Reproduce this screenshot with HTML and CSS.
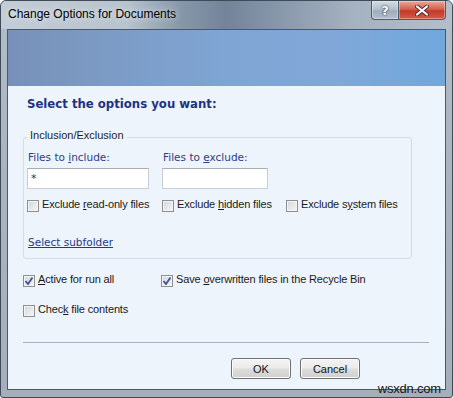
FILE: index.html
```html
<!DOCTYPE html>
<html lang="en">
<head>
    <meta charset="UTF-8">
    <title>Change Options for Documents</title>
    <link rel="stylesheet" href="styles.css">
</head>
<body>
    <div class="window">
        <div class="titlebar">
            <span class="title">Change Options for Documents</span>
            <div class="caption-buttons">
                <span class="cap-btn help">?</span>
                <span class="cap-btn close">
                    <svg width="14" height="11" viewBox="0 0 14 11">
                        <path d="M2 1.5 L12 9.5 M12 1.5 L2 9.5" stroke="#5a2a24" stroke-width="4" stroke-linecap="round"/>
                        <path d="M2 1.5 L12 9.5 M12 1.5 L2 9.5" stroke="#ffffff" stroke-width="2.2" stroke-linecap="round"/>
                    </svg>
                </span>
            </div>
        </div>

        <div class="client">
            <div class="banner"></div>

            <div class="content">
                <h1>Select the options you want:</h1>

                <fieldset class="group">
                    <legend>Inclusion/Exclusion</legend>
                    <div class="filter-grid">
                        <label class="field-label">Files to <u>i</u>nclude:</label>
                        <label class="field-label">Files to <u>e</u>xclude:</label>
                        <span></span>

                        <input class="textbox include" type="text" value="*">
                        <input class="textbox exclude" type="text" value="">
                        <span></span>

                        <div class="check"><span class="box"></span><span>Exclude <u>r</u>ead-only files</span></div>
                        <div class="check"><span class="box"></span><span>Exclude <u>h</u>idden files</span></div>
                        <div class="check"><span class="box"></span><span>Exclude s<u>y</u>stem files</span></div>
                    </div>
                    <a class="link" href="#">Select subfolder</a>
                </fieldset>

                <div class="options">
                    <div class="check">
                        <span class="box checked">
                            <svg width="10" height="10" viewBox="0 0 10 10"><path d="M1.5 5 L4 8 L8.5 1.5" fill="none" stroke="#3d5494" stroke-width="1.8"/></svg>
                        </span>
                        <span><u>A</u>ctive for run all</span>
                    </div>
                    <div class="check">
                        <span class="box checked">
                            <svg width="10" height="10" viewBox="0 0 10 10"><path d="M1.5 5 L4 8 L8.5 1.5" fill="none" stroke="#3d5494" stroke-width="1.8"/></svg>
                        </span>
                        <span>Save <u>o</u>verwritten files in the Recycle Bin</span>
                    </div>
                    <div class="check second-row">
                        <span class="box"></span>
                        <span>Chec<u>k</u> file contents</span>
                    </div>
                </div>

                <hr class="separator">

                <div class="buttons">
                    <button class="btn">OK</button>
                    <button class="btn">Cancel</button>
                </div>
            </div>
        </div>

        <span class="watermark">wsxdn.com</span>
    </div>
</body>
</html>
```

FILE: styles.css
```css
body {
    margin: 0;
    font-family: "Liberation Sans", Arial, sans-serif;
    font-size: 11px;
}
.window {
    position: relative;
    width: 453px;
    height: 398px;
    box-sizing: border-box;
    border: 1px solid #3f4b58;
    border-radius: 6px 6px 3px 3px;
    background: linear-gradient(to bottom, #b3bec9, #a9b4bf 40%, #a4afba);
    display: flex;
    flex-direction: column;
    overflow: hidden;
}
.titlebar {
    height: 28px;
    display: flex;
    justify-content: space-between;
    align-items: flex-start;
    padding: 0 6px 0 7px;
    background: linear-gradient(to right, #c3cdd7 0%, #b7c3ce 28%, #8697aa 40%, #73849a 50%, #8898ab 62%, #a4b2c1 78%, #b2bfcb 100%);
    border-radius: 5px 5px 0 0;
}
.title {
    padding-top: 6px;
    font-size: 12px;
    line-height: 15px;
    color: #000;
    text-shadow: 0 0 6px rgba(255, 255, 255, 0.9);
}
.caption-buttons {
    display: flex;
}
.cap-btn {
    height: 18px;
    border: 1px solid #505b68;
    border-top: none;
    display: flex;
    align-items: center;
    justify-content: center;
    box-shadow: inset 0 0 0 1px rgba(255, 255, 255, 0.35);
}
.help {
    width: 26px;
    border-right: none;
    border-radius: 0 0 0 4px;
    background: linear-gradient(to bottom, #d3dbe4, #b5c1ce 45%, #9eadbd 55%, #b2c0cd);
    color: #fff;
    font-family: "DejaVu Sans", sans-serif;
    font-weight: bold;
    font-size: 13px;
    text-shadow: 0 0 2px #2d3845, 0 0 1px #2d3845;
}
.close {
    width: 46px;
    border-radius: 0 0 4px 0;
    background: linear-gradient(to bottom, #e9a99c, #d4604f 45%, #c3392a 55%, #d65b43);
}
.client {
    flex: 1;
    margin: 0 6px 7px 6px;
    border: 1px solid #4a5868;
    background: #eef4fb;
    display: flex;
    flex-direction: column;
}
.banner {
    height: 56px;
    background: linear-gradient(to right, #7890b8 0%, #7c9cc6 25%, #7fa5d4 50%, #80a7d8 75%, #70a8dd 100%);
}
.content {
    padding: 0 16px 0 15px;
}
h1 {
    margin: 10px 0 0 4px;
    font-family: "DejaVu Sans Condensed", "DejaVu Sans", sans-serif;
    font-size: 13px;
    line-height: 16px;
    font-weight: bold;
    color: #1f3380;
}
.group {
    margin: 17px 17px 0 0;
    padding: 5px 0 9px 3px;
    border: 1px solid #d3dce6;
    border-radius: 3px;
}
.group legend {
    padding: 0 3px 4px;
    line-height: 13px;
    color: #1e1e1e;
}
.filter-grid {
    display: grid;
    grid-template-columns: 135px 124px auto;
}
.field-label {
    padding-left: 1px;
    font-family: "DejaVu Sans", Verdana, sans-serif;
    font-size: 10.5px;
    line-height: 13px;
    color: #2b3d86;
}
.textbox {
    margin-top: 4px;
    height: 21px;
    box-sizing: border-box;
    border: 1px solid #c9ced5;
    border-top-color: #a9aeb6;
    background: #fff;
    padding: 0 3px;
    font-family: "DejaVu Sans", Verdana, sans-serif;
    font-size: 11px;
    color: #333;
    outline: none;
}
.textbox.include {
    width: 122px;
}
.textbox.exclude {
    width: 106px;
}
.filter-grid .check {
    margin-top: 9px;
}
.check {
    display: flex;
    align-items: flex-start;
    gap: 3px;
    line-height: 13px;
    letter-spacing: -0.15px;
    color: #1a1a1a;
}
.box {
    width: 12px;
    height: 12px;
    margin-top: 2px;
    box-sizing: border-box;
    border: 1px solid #8e8f8f;
    background: linear-gradient(135deg, #d2d5da, #f7f7f7);
    box-shadow: inset 0 0 0 1px #f4f4f4;
    display: flex;
    align-items: center;
    justify-content: center;
}
.link {
    display: block;
    margin-top: 24px;
    padding-left: 1px;
    font-family: "DejaVu Sans", Verdana, sans-serif;
    font-size: 10.5px;
    line-height: 13px;
    color: #1d3b8c;
    width: max-content;
}
.options {
    margin-top: 14px;
    display: grid;
    grid-template-columns: 138px auto;
}
.options .second-row {
    margin-top: 16px;
}
.separator {
    margin: 25px 0 0;
    border: none;
    border-top: 1px solid #a2b2c3;
    height: 0;
}
.buttons {
    margin-top: 15px;
    padding-right: 69px;
    display: flex;
    justify-content: flex-end;
    gap: 9px;
}
.btn {
    width: 60px;
    height: 21px;
    border: 1px solid #707070;
    border-radius: 3px;
    background: linear-gradient(to bottom, #f3f3f3 0%, #ebebeb 48%, #dddddd 52%, #cfcfcf 100%);
    box-shadow: inset 0 0 0 1px #fbfbfb;
    font-family: "Liberation Sans", Arial, sans-serif;
    font-size: 11px;
    color: #111;
    padding: 0;
}
.watermark {
    position: absolute;
    right: 11px;
    bottom: 1px;
    font-size: 13px;
    letter-spacing: -0.2px;
    color: #1a1a1a;
}
```
